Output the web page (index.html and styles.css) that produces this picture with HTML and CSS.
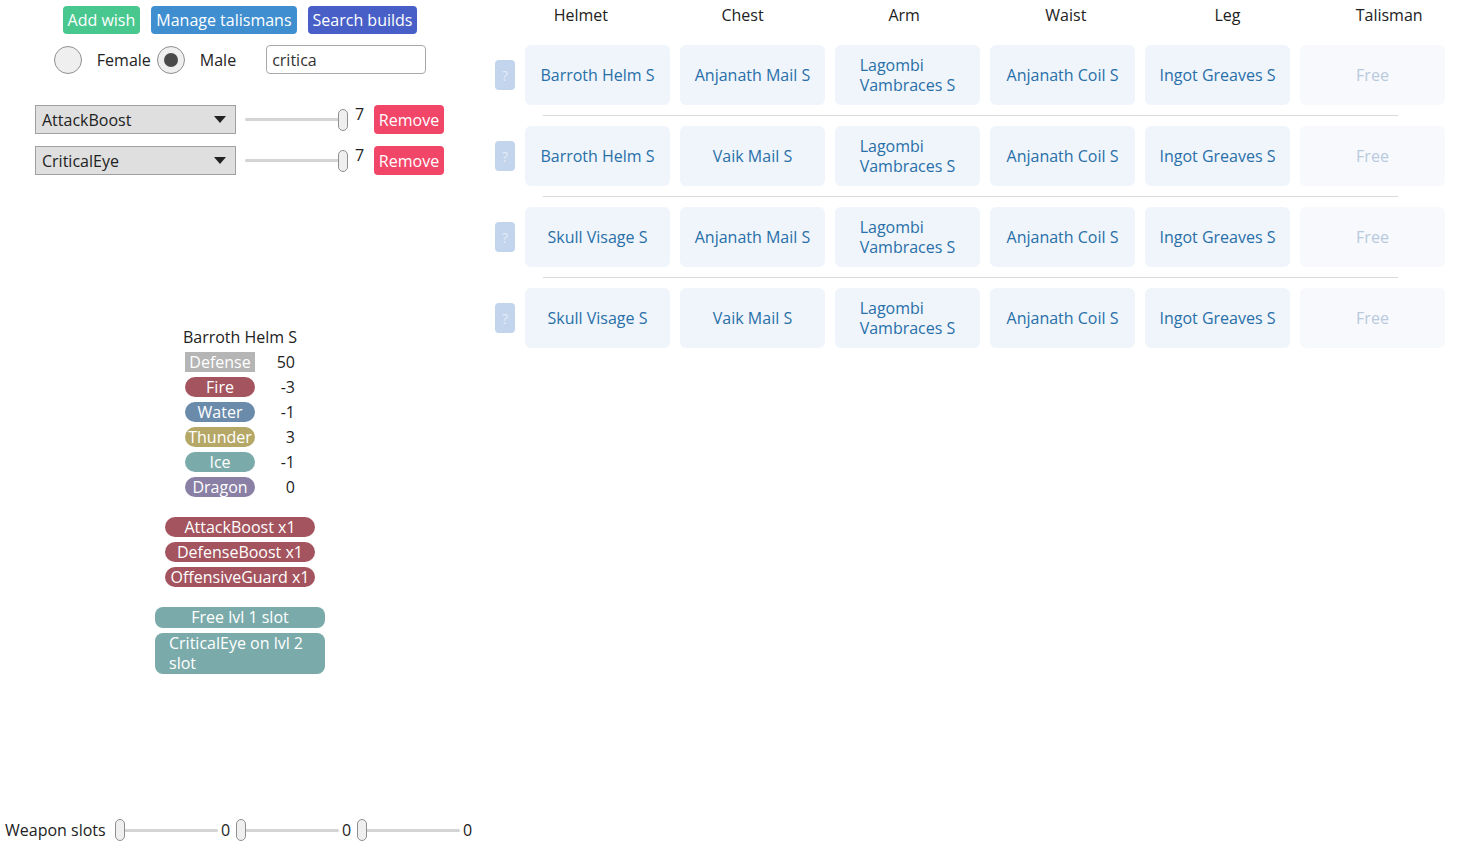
FILE: index.html
```html
<!DOCTYPE html>
<html>
<head>
<meta charset="utf-8">
<link rel="stylesheet" href="styles.css">
</head>
<body>
<div class="left">
  <div class="top-buttons">
    <button class="btn btn-green">Add wish</button>
    <button class="btn btn-blue">Manage talismans</button>
    <button class="btn btn-indigo">Search builds</button>
  </div>
  <div class="gender-row">
    <span class="radio"></span>
    <span class="radio-label">Female</span>
    <span class="radio checked"></span>
    <span class="radio-label male">Male</span>
    <input class="search" type="text" value="critica">
  </div>
  <div class="wishes">
    <div class="wish">
      <div class="select"><span>AttackBoost</span><span class="arrow"></span></div>
      <div class="slider"><span class="track"></span><span class="thumb"></span></div>
      <span class="level">7</span>
      <button class="btn btn-red">Remove</button>
    </div>
    <div class="wish">
      <div class="select"><span>CriticalEye</span><span class="arrow"></span></div>
      <div class="slider"><span class="track"></span><span class="thumb"></span></div>
      <span class="level">7</span>
      <button class="btn btn-red">Remove</button>
    </div>
  </div>
  <div class="details">
    <div class="piece-name">Barroth Helm S</div>
    <div class="stats">
      <span class="tag tag-def">Defense</span><span class="val">50</span>
      <span class="tag tag-fire">Fire</span><span class="val">-3</span>
      <span class="tag tag-water">Water</span><span class="val">-1</span>
      <span class="tag tag-thunder">Thunder</span><span class="val">3</span>
      <span class="tag tag-ice">Ice</span><span class="val">-1</span>
      <span class="tag tag-dragon">Dragon</span><span class="val">0</span>
    </div>
    <div class="skills">
      <span class="skill">AttackBoost x1</span>
      <span class="skill">DefenseBoost x1</span>
      <span class="skill">OffensiveGuard x1</span>
    </div>
    <div class="slots">
      <span class="slot center">Free lvl 1 slot</span>
      <span class="slot">CriticalEye on lvl 2 slot</span>
    </div>
  </div>
  <div class="weapon-row">
    <span class="weapon-label">Weapon slots</span>
    <div class="slider wslider"><span class="track"></span><span class="thumb left"></span></div>
    <span class="wval">0</span>
    <div class="slider wslider"><span class="track"></span><span class="thumb left"></span></div>
    <span class="wval">0</span>
    <div class="slider wslider"><span class="track"></span><span class="thumb left"></span></div>
    <span class="wval">0</span>
  </div>
</div>
<div class="right">
  <div class="headers">
    <span>Helmet</span><span>Chest</span><span>Arm</span><span>Waist</span><span>Leg</span><span>Talisman</span>
  </div>
  <div class="build">
    <button class="qbtn">?</button>
    <div class="card">Barroth Helm S</div>
    <div class="card">Anjanath Mail S</div>
    <div class="card"><span class="two">Lagombi<br>Vambraces S</span></div>
    <div class="card">Anjanath Coil S</div>
    <div class="card">Ingot Greaves S</div>
    <div class="card free">Free</div>
  </div>
  <div class="sep"></div>
  <div class="build">
    <button class="qbtn">?</button>
    <div class="card">Barroth Helm S</div>
    <div class="card">Vaik Mail S</div>
    <div class="card"><span class="two">Lagombi<br>Vambraces S</span></div>
    <div class="card">Anjanath Coil S</div>
    <div class="card">Ingot Greaves S</div>
    <div class="card free">Free</div>
  </div>
  <div class="sep"></div>
  <div class="build">
    <button class="qbtn">?</button>
    <div class="card">Skull Visage S</div>
    <div class="card">Anjanath Mail S</div>
    <div class="card"><span class="two">Lagombi<br>Vambraces S</span></div>
    <div class="card">Anjanath Coil S</div>
    <div class="card">Ingot Greaves S</div>
    <div class="card free">Free</div>
  </div>
  <div class="sep"></div>
  <div class="build">
    <button class="qbtn">?</button>
    <div class="card">Skull Visage S</div>
    <div class="card">Vaik Mail S</div>
    <div class="card"><span class="two">Lagombi<br>Vambraces S</span></div>
    <div class="card">Anjanath Coil S</div>
    <div class="card">Ingot Greaves S</div>
    <div class="card free">Free</div>
  </div>
</div>
</body>
</html>
```
FILE: styles.css
```css
* { box-sizing: border-box; }
html, body { margin: 0; padding: 0; }
body {
  font-family: "Open Sans", "Noto Sans", sans-serif;
  font-size: 16px;
  color: #222;
  background: #fff;
  display: flex;
  width: 1470px;
  height: 847px;
  overflow: hidden;
}
.left {
  width: 480px;
  flex: none;
  display: flex;
  flex-direction: column;
  height: 847px;
}
.top-buttons {
  display: flex;
  justify-content: center;
  gap: 11px;
  padding-top: 6px;
}
.btn {
  font-family: inherit;
  font-size: 16px;
  height: 28px;
  border: none;
  border-radius: 4px;
  color: #fff;
  padding: 0 5px;
  line-height: 28px;
}
.btn-green { background: #48c78e; }
.btn-blue { background: #3e8ed0; }
.btn-indigo { background: #485fc7; }
.btn-red { background: #f14668; height: 29px; width: 70px; padding: 0; }
.gender-row {
  display: flex;
  align-items: center;
  justify-content: center;
  margin-top: 11px;
  height: 29px;
}
.radio {
  width: 28px;
  height: 28px;
  border-radius: 50%;
  border: 1px solid #8f8f8f;
  background: #efefef;
  display: flex;
  align-items: center;
  justify-content: center;
}
.radio.checked::after {
  content: "";
  width: 14px;
  height: 14px;
  border-radius: 50%;
  background: #4a4a4a;
}
.radio-label { margin-left: 15px; margin-right: 6px; color: #222; }
.radio-label.male { margin-right: 30px; }
.search {
  width: 160px;
  height: 29px;
  border: 1px solid #a8a8a8;
  border-radius: 4px;
  font-family: inherit;
  font-size: 16px;
  padding: 0 5px;
  color: #333;
}
.wishes {
  margin-top: 31px;
  display: flex;
  flex-direction: column;
  gap: 12px;
  padding-left: 35px;
}
.wish {
  display: flex;
  align-items: center;
  height: 29px;
}
.select {
  width: 201px;
  height: 29px;
  background: #dfdfdf;
  border: 1px solid #a0a0a0;
  display: flex;
  align-items: center;
  justify-content: space-between;
  padding: 0 9px 0 6px;
  color: #222;
}
.arrow {
  width: 0; height: 0;
  border-left: 6px solid transparent;
  border-right: 6px solid transparent;
  border-top: 7px solid #222;
}
.slider {
  position: relative;
  width: 103px;
  height: 24px;
  margin-left: 9px;
  display: flex;
  align-items: center;
  flex: none;
}
.track {
  display: block;
  width: 100%;
  height: 3px;
  background: #d4d4d4;
  border-radius: 2px;
}
.thumb {
  position: absolute;
  right: 0;
  top: 1px;
  width: 10px;
  height: 22px;
  border-radius: 5px;
  background: #efefef;
  border: 1px solid #8f8f8f;
}
.thumb.left { left: 0; right: auto; }
.level {
  margin-left: 7px;
  width: 19px;
  align-self: flex-start;
  margin-top: -2px;
}
.details {
  margin-top: 152px;
  display: flex;
  flex-direction: column;
  align-items: center;
}
.piece-name { line-height: 20px; }
.stats {
  display: grid;
  grid-template-columns: 70px 40px;
  row-gap: 5px;
  margin-top: 5px;
  line-height: 20px;
}
.tag {
  display: block;
  height: 20px;
  color: #fff;
  text-align: center;
  border-radius: 10px;
}
.val { text-align: right; }
.tag-def { background: #b5b5b5; border-radius: 0; }
.tag-fire { background: #a4545e; }
.tag-water { background: #6b8bab; }
.tag-thunder { background: #b5a867; }
.tag-ice { background: #7aabaa; }
.tag-dragon { background: #8a7fa4; }
.skills {
  margin-top: 20px;
  display: flex;
  flex-direction: column;
  gap: 5px;
}
.skill {
  width: 150px;
  height: 20px;
  line-height: 20px;
  background: #a4545e;
  color: #fff;
  text-align: center;
  border-radius: 10px;
}
.slots {
  margin-top: 20px;
  display: flex;
  flex-direction: column;
  gap: 5px;
}
.slot {
  width: 170px;
  background: #7aabaa;
  color: #fff;
  border-radius: 8px;
  line-height: 20px;
  padding: 0 14px 1px;
}
.slot.center { text-align: center; }
.weapon-row {
  margin-top: auto;
  margin-bottom: 5px;
  display: flex;
  align-items: center;
  padding-left: 5px;
  height: 24px;
}
.weapon-label { white-space: nowrap; flex: none; width: 105px; }
.wslider { width: 103px; margin-left: 5px; }
.weapon-label + .wslider { margin-left: 5px; }
.wval { margin-left: 3px; width: 10px; flex: none; }
.right {
  flex: 1;
  display: flex;
  flex-direction: column;
}
.headers {
  display: grid;
  grid-template-columns: repeat(6, 1fr);
  margin-left: 20px;
  text-align: center;
  padding-top: 4px;
  height: 45px;
  color: #222;
}
.build {
  display: flex;
  align-items: center;
  gap: 10px;
  padding-left: 15px;
  height: 60px;
}
.qbtn {
  width: 20px;
  height: 30px;
  border: none;
  border-radius: 4px;
  background: #c3d5ec;
  color: #e3ecf7;
  font-family: inherit;
  font-size: 14px;
  padding: 0;
}
.card {
  width: 145px;
  height: 60px;
  border-radius: 6px;
  background: #eff5fb;
  color: #296fa8;
  display: flex;
  align-items: center;
  justify-content: center;
  text-align: center;
  line-height: 20px;
}
.card .two { text-align: left; }
.card.free { background: #f7f9fc; color: #b9c9de; }
.sep {
  height: 1px;
  background: #d9d9d9;
  margin: 10px 0 10px 63px;
  width: 855px;
}
```
